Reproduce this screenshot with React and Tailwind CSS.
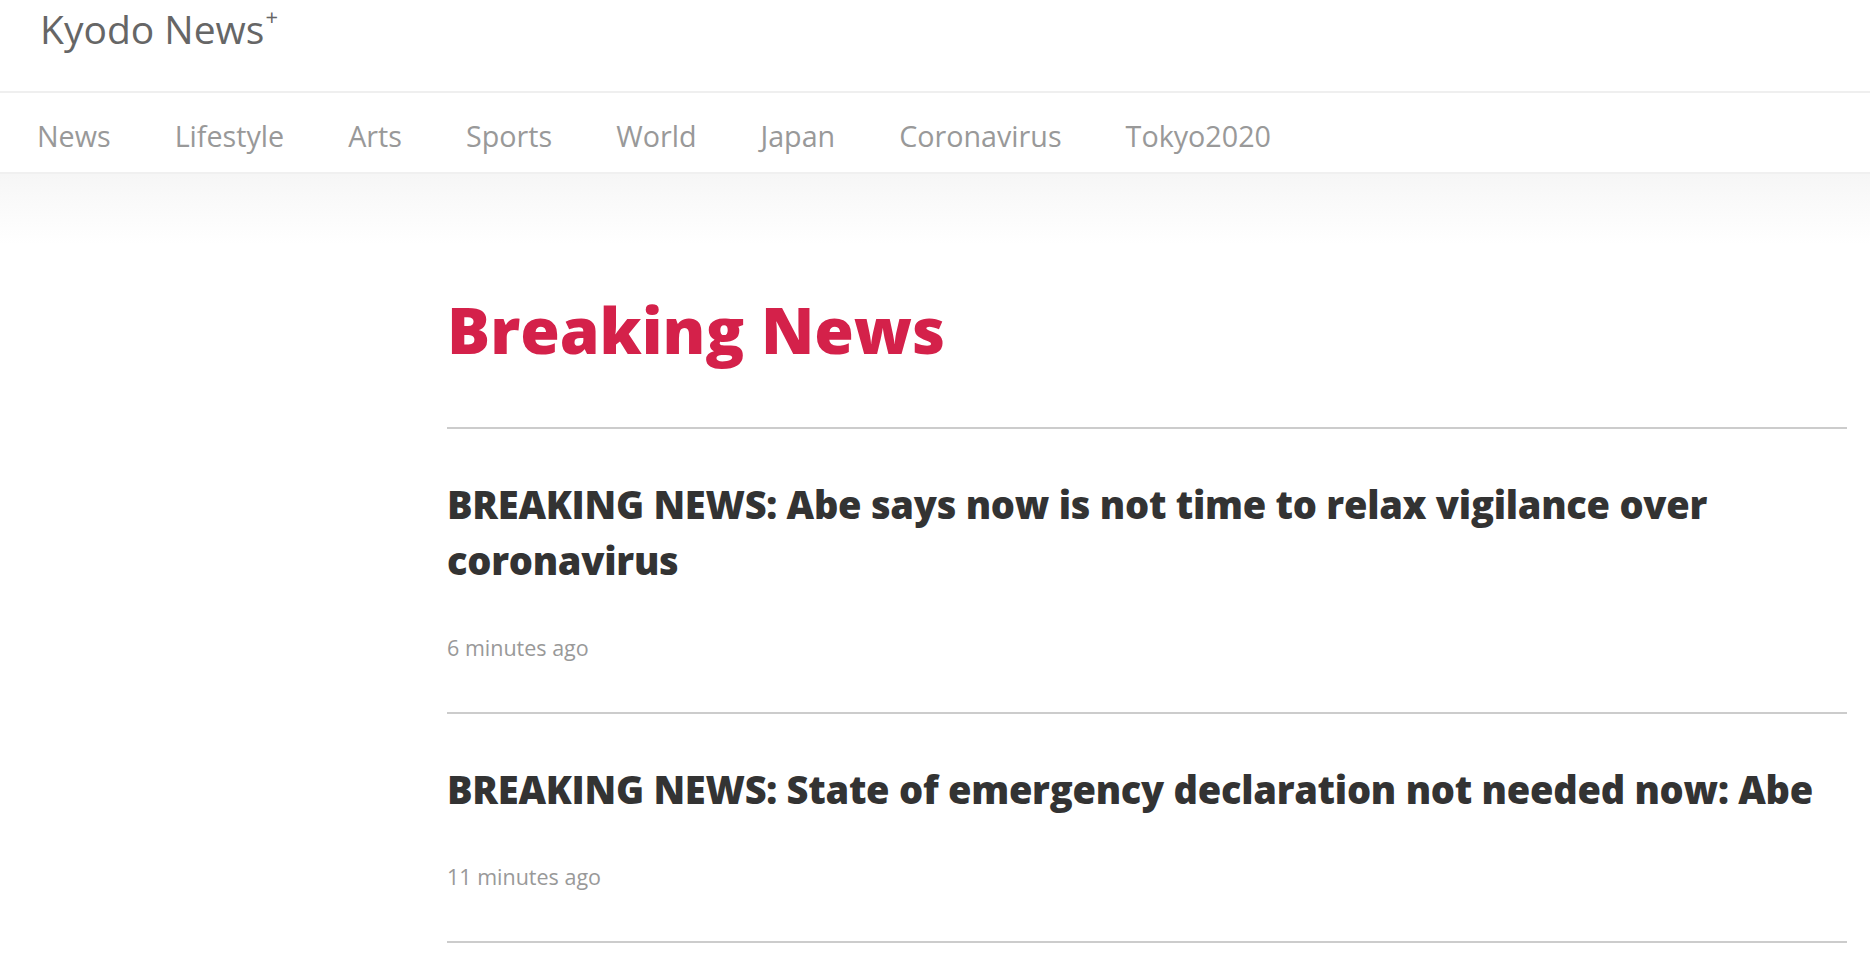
import React from 'react'

const navItems = ['News', 'Lifestyle', 'Arts', 'Sports', 'World', 'Japan', 'Coronavirus', 'Tokyo2020']

const stories = [
    { title: 'BREAKING NEWS: Abe says now is not time to relax vigilance over coronavirus', time: '6 minutes ago' },
    { title: 'BREAKING NEWS: State of emergency declaration not needed now: Abe', time: '11 minutes ago' },
]

export default function App() {
    return (
        <div className="min-h-screen bg-white font-['Open_Sans',sans-serif]">
            <header className="h-[93px] border-b-2 border-[#efefef] pl-[40px]">
                <a href="#" className="inline-flex items-start text-[39px] leading-none text-[#666] pt-[5px]">
                    <span className="pt-[4px]">Kyodo News</span>
                    <span className="text-[22px] leading-none ml-[1px]">+</span>
                </a>
            </header>

            <nav className="h-[81px] border-b-2 border-[#f0f0f0] flex items-center pl-[37px] pt-[8px] gap-[64px]">
                {navItems.map((item) => (
                    <a key={item} href="#" className="text-[28.7px] text-[#999] leading-none">
                        {item}
                    </a>
                ))}
            </nav>

            <div className="bg-gradient-to-b from-[#f6f6f6] to-white h-[70px]"></div>

            <div className="flex">
                <div className="w-[447px] shrink-0"></div>
                <main className="flex-1 pr-[23px]">
                    <h1 className="text-[64px] font-extrabold leading-[1.2] text-[#d4214a] mt-[48px]">
                        Breaking News
                    </h1>
                    <ul className="mt-[58px] border-t-2 border-[#cccccc]">
                        {stories.map((story) => (
                            <li key={story.time} className="border-b-2 border-[#cccccc] pt-[47px] pb-[48px]">
                                <h2 className="text-[38px] font-extrabold leading-[56px] text-[#333] tracking-[-0.007em]">
                                    {story.title}
                                </h2>
                                <p className="mt-[44px] text-[21.5px] leading-[1.5] text-[#999]">{story.time}</p>
                            </li>
                        ))}
                    </ul>
                </main>
            </div>
        </div>
    )
}
